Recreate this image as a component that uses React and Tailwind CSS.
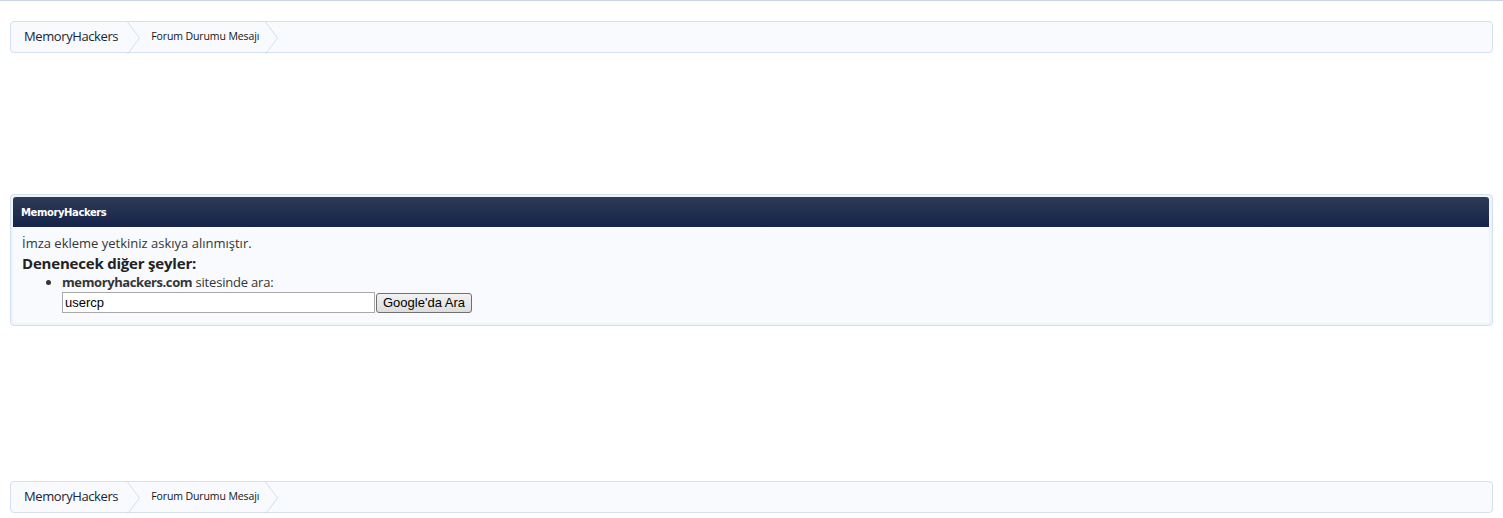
const crumbFont = { fontFamily: '"Open Sans", "DejaVu Sans", sans-serif' };

function Chevron() {
  return (
    <svg width="16" height="32" viewBox="0 0 16 32" className="shrink-0 block">
      <polyline points="0.5,0 12.5,16 0.5,32" fill="none" stroke="#d3e0ee" strokeWidth="1" />
    </svg>
  );
}

function Breadcrumb() {
  return (
    <div className="mx-[10px] h-[32px] flex items-stretch rounded-[4px] border border-[#d3e0ee] bg-[#f8fafd]">
      <div className="flex items-center pl-[13px] pr-[9px] text-[13px] tracking-[-0.4px] text-[#1b2438]" style={crumbFont}>
        MemoryHackers
      </div>
      <Chevron />
      <div className="flex items-center pl-[8px] pr-[6px] text-[10.5px] tracking-[-0.1px] text-[#141414]" style={crumbFont}>
        Forum Durumu Mesajı
      </div>
      <Chevron />
    </div>
  );
}

export default function App() {
  return (
    <div className="w-[1503px] h-[518px] bg-white overflow-hidden border-t border-[#c9d5e2]">
      <div className="pt-[20px]">
        <Breadcrumb />
      </div>

      <div className="mt-[141px] mx-[10px] rounded-[4px] border border-[#d3e0ee] bg-[#f0f4f9] p-[2px] pr-[3px]">
        <div
          className="h-[30px] flex items-center px-[8px] rounded-t-[3px] bg-gradient-to-b from-[#2e3b57] to-[#16234a] text-white text-[10px] tracking-[-0.4px] font-bold"
          style={{ fontFamily: '"DejaVu Sans", Verdana, sans-serif' }}
        >
          MemoryHackers
        </div>
        <div
          className="bg-[#f8fafd] pl-[9px] pt-[8px] pb-[10px] text-[#353535]"
          style={{ fontFamily: '"Open Sans", "DejaVu Sans", sans-serif' }}
        >
          <div className="text-[13px] leading-[17px]">İmza ekleme yetkiniz askıya alınmıştır.</div>
          <div className="text-[15px] tracking-[-0.2px] leading-[20px] font-bold mt-[1px] text-[#222]">Denenecek diğer şeyler:</div>
          <ul className="list-disc pl-[40px] text-[13px] leading-[18px]">
            <li>
              <span className="font-bold tracking-[-0.4px]">memoryhackers.com</span>{' '}
              <span className="tracking-[-0.2px]">sitesinde ara:</span>
              <div className="mt-[1px] flex items-center gap-[1px]" style={{ fontFamily: '"Liberation Sans", Arial, sans-serif' }}>
                <input
                  defaultValue="usercp"
                  className="w-[313px] h-[21px] border border-[#a9a9a9] bg-white px-[2px] text-[13px] text-black outline-none"
                />
                <button className="w-[96px] h-[20px] rounded-[3px] border border-[#707070] bg-gradient-to-b from-[#f2f2f2] to-[#dddddd] text-[13px] text-black leading-none">
                  Google'da Ara
                </button>
              </div>
            </li>
          </ul>
        </div>
      </div>

      <div className="mt-[155px]">
        <Breadcrumb />
      </div>
    </div>
  );
}
